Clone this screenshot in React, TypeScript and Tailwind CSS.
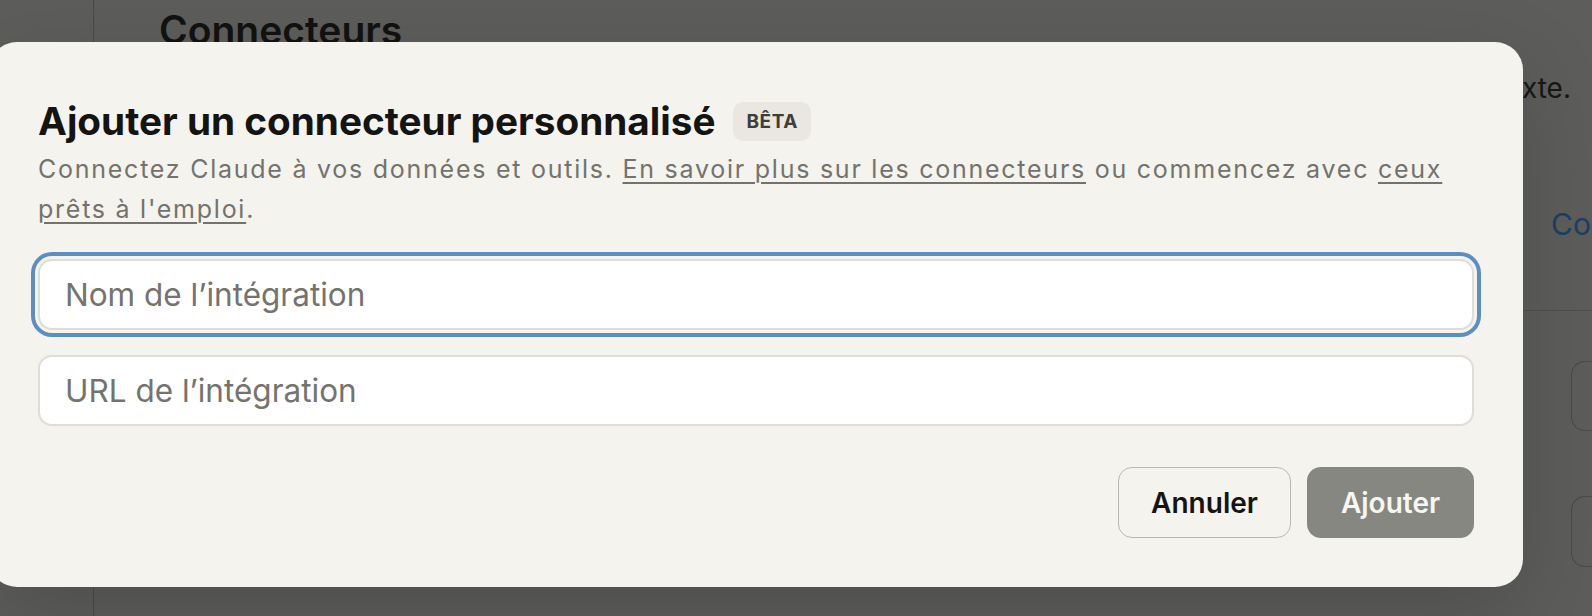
import React from 'react'

export default function App() {
  return (
    <div className="relative w-[1592px] h-[616px] overflow-hidden bg-[#5d5d5b] font-['Inter',sans-serif]">
      {/* Page behind the overlay */}
      <div className="flex h-full">
        <aside className="w-[94px] shrink-0 border-r border-[#4b4b49]" />
        <main className="flex-1 flex flex-col">
          <div className="pl-[65px] pt-[6px]">
            <h1 className="text-[39px] font-semibold leading-[48px] text-[#121211]">Connecteurs</h1>
          </div>
          <p className="mt-[14px] pr-[21px] text-right text-[28px] leading-[40px] text-[#171716]">
            Permettez à Claude de se connecter à vos outils pour plus de contexte.
          </p>
          <div className="mt-[96px] flex justify-end border-b border-[#4f4f4d] pb-[66px]">
            <span className="w-[41px] overflow-hidden whitespace-nowrap text-[30px] leading-[40px] text-[#1c3f66]">
              Connecter
            </span>
          </div>
          <div className="mt-[50px] flex flex-col items-end gap-[65px]">
            <div className="h-[70px] w-[21px] rounded-l-[14px] border-y border-l border-[#4a4a48]" />
            <div className="h-[71px] w-[21px] rounded-l-[14px] border-y border-l border-[#4a4a48]" />
          </div>
        </main>
      </div>

      {/* Modal */}
      <div className="absolute left-[-11px] top-[42px] w-[1534px] rounded-[28px] bg-[#f4f3ee] px-[49px] pt-[55px] pb-[49px] shadow-[0_30px_90px_rgba(0,0,0,0.16)]">
        <div className="flex items-center gap-[18px]">
          <h2 className="text-[38.7px] font-bold leading-[49px] text-[#141413]">
            Ajouter un connecteur personnalisé
          </h2>
          <span className="rounded-[10px] bg-[#e9e7e0] px-[13px] py-[7px] text-[19px] font-bold leading-[25px] tracking-[0.03em] text-[#3d3d3a]">
            BÊTA
          </span>
        </div>
        <p className="mt-[3px] text-[25px] leading-[40px] tracking-[0.07em] text-[#73726c]">
          Connectez Claude à vos données et outils.{' '}
          <a className="underline decoration-[2px] underline-offset-[4px]">En savoir plus sur les connecteurs</a> ou
          commencez avec <a className="underline decoration-[2px] underline-offset-[4px]">ceux prêts à l'emploi</a>.
        </p>

        <div className="mt-[30px] flex flex-col gap-[25px]">
          <input
            placeholder="Nom de l’intégration"
            className="h-[71px] w-full rounded-[14px] border-2 border-[#dfddd7] bg-white px-[25px] text-[31.5px] text-[#141413] placeholder-[#74736d] outline-none shadow-[0_0_0_3px_#f4f3ee,0_0_0_7px_#5b8fc4]"
          />
          <input
            placeholder="URL de l’intégration"
            className="h-[71px] w-full rounded-[14px] border-2 border-[#dfddd7] bg-white px-[25px] text-[31.5px] text-[#141413] placeholder-[#74736d] outline-none"
          />
        </div>

        <div className="mt-[41px] flex justify-end gap-[16px]">
          <button className="h-[71px] w-[173px] rounded-[14px] border border-[#b9b7b1] text-[28px] font-semibold text-[#141413]">
            Annuler
          </button>
          <button className="h-[71px] w-[167px] rounded-[14px] bg-[#878782] text-[28px] font-semibold text-[#f7f6f1]">
            Ajouter
          </button>
        </div>
      </div>
    </div>
  )
}
